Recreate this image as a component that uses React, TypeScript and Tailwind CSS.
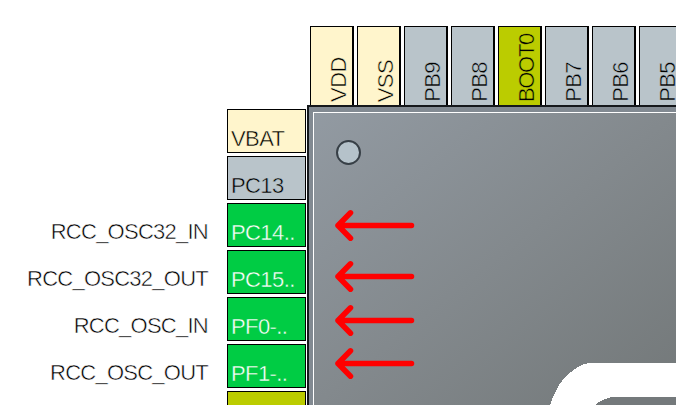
const YELLOW = 'bg-[#fff5cc]';
const GRAY = 'bg-[#b9c4ca]';
const OLIVE = 'bg-[#bbcc00]';
const GREEN = 'bg-[#00cc44]';

// A thin outline in the pin's own colour keeps the lettering light.
const YELLOW_EDGE = '[-webkit-text-stroke:0.5px_#fff5cc]';
const GRAY_EDGE = '[-webkit-text-stroke:0.5px_#b9c4ca]';
const OLIVE_EDGE = '[-webkit-text-stroke:0.5px_#bbcc00]';
const GREEN_EDGE = '[-webkit-text-stroke:0.4px_#00cc44]';

const topPins = [
  { name: 'VDD', fill: YELLOW, edge: YELLOW_EDGE, tracking: 'tracking-[-0.5px]' },
  { name: 'VSS', fill: YELLOW, edge: YELLOW_EDGE, tracking: 'tracking-[-0.6px]' },
  { name: 'PB9', fill: GRAY, edge: GRAY_EDGE, tracking: 'tracking-[-0.6px]' },
  { name: 'PB8', fill: GRAY, edge: GRAY_EDGE, tracking: 'tracking-[-0.6px]' },
  { name: 'BOOT0', fill: OLIVE, edge: OLIVE_EDGE, tracking: 'tracking-[-1.3px]' },
  { name: 'PB7', fill: GRAY, edge: GRAY_EDGE, tracking: 'tracking-[-0.6px]' },
  { name: 'PB6', fill: GRAY, edge: GRAY_EDGE, tracking: 'tracking-[-0.6px]' },
  { name: 'PB5', fill: GRAY, edge: GRAY_EDGE, tracking: 'tracking-[-0.6px]' },
];

const leftPins = [
  { name: 'VBAT', signal: '', fill: YELLOW, text: 'text-black', edge: YELLOW_EDGE },
  { name: 'PC13', signal: '', fill: GRAY, text: 'text-black', edge: GRAY_EDGE },
  { name: 'PC14..', signal: 'RCC_OSC32_IN', fill: GREEN, text: 'text-white', edge: GREEN_EDGE },
  { name: 'PC15..', signal: 'RCC_OSC32_OUT', fill: GREEN, text: 'text-white', edge: GREEN_EDGE },
  { name: 'PF0-..', signal: 'RCC_OSC_IN', fill: GREEN, text: 'text-white', edge: GREEN_EDGE },
  { name: 'PF1-..', signal: 'RCC_OSC_OUT', fill: GREEN, text: 'text-white', edge: GREEN_EDGE },
  { name: '', signal: '', fill: OLIVE, text: 'text-black', edge: OLIVE_EDGE },
];

// Vertical centre of each arrow, measured from the top of the chip body.
const arrows = [120.5, 171.5, 215.5, 258.5];

function TopPins() {
  return (
    <div className="flex h-[79px] shrink-0 gap-[3px] pl-[310px]">
      {topPins.map((pin) => (
        <div
          key={pin.name}
          className={`flex w-11 shrink-0 items-end justify-end border-t border-r-2 border-l border-black pr-px pb-[3px] ${pin.fill}`}
        >
          <span
            className={`rotate-180 leading-6 whitespace-nowrap [writing-mode:vertical-rl] ${pin.tracking} ${pin.edge}`}
          >
            {pin.name}
          </span>
        </div>
      ))}
    </div>
  );
}

function LeftPins() {
  return (
    <div className="flex w-[307px] shrink-0 flex-col gap-[3px] pt-1">
      {leftPins.map((pin, i) => (
        <div key={i} className="flex h-11 shrink-0">
          <div className="w-[227px] pt-[17px] pr-[19px] text-right leading-6 tracking-[-0.75px] whitespace-nowrap [-webkit-text-stroke:0.5px_white]">
            {pin.signal}
          </div>
          <div
            className={`w-[79px] border border-black pt-[17px] pl-[3px] leading-6 tracking-[-0.6px] whitespace-nowrap ${pin.fill} ${pin.text} ${pin.edge}`}
          >
            {pin.name}
          </div>
        </div>
      ))}
    </div>
  );
}

function Chip() {
  return (
    <div className="relative grow border-t-2 border-l-2 border-[#15181b] bg-[#828a92] pt-[5px] pl-1">
      <div className="h-full border-t border-l border-white bg-linear-to-br from-[#929aa2] via-[#83898d] to-[#737879]">
        <div className="pt-[27px] pl-[22px]">
          <div className="size-[25px] rounded-full border-2 border-[#373f46] bg-[#b5c2ca]" />
        </div>
      </div>
      <svg className="absolute -top-[2px] -left-[2px]" width="369" height="300" fill="none">
        <g shapeRendering="crispEdges">
          <path d="M243 300C248 285 254 274 264 267C271 261 277 258 285 258H369V300Z" fill="#fff" />
          <path d="M288 300C293 296 300 292 307 292H369V300Z" fill="#74797b" />
        </g>
        <g stroke="#ff0000" strokeWidth="5.5" strokeLinecap="round" strokeLinejoin="round">
          {arrows.map((y) => (
            <path key={y} d={`M104.5 ${y}H31M43.5 ${y - 12.7}L31 ${y}L43.5 ${y + 12.7}`} />
          ))}
        </g>
      </svg>
    </div>
  );
}

export default function App() {
  return (
    <div className="h-[416px] w-[692px] overflow-hidden bg-white">
      <div className="flex h-[405px] w-[676px] flex-col overflow-hidden pt-[26px] font-['Liberation_Sans',Arial,sans-serif] text-[22px] text-black">
        <TopPins />
        <div className="flex h-[300px] shrink-0">
          <LeftPins />
          <Chip />
        </div>
      </div>
    </div>
  );
}
